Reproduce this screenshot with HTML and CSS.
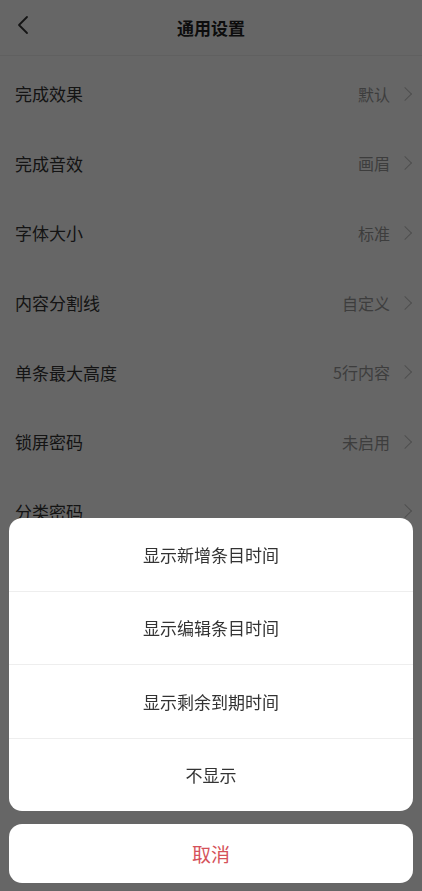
FILE: index.html
```html
<!DOCTYPE html>
<html lang="zh-CN">

<head>
    <meta charset="UTF-8">
    <meta name="viewport" content="width=device-width, initial-scale=1.0">
    <title>通用设置</title>
    <link rel="stylesheet" href="styles.css">
</head>

<body>

    <div class="page">
        <div class="header">
            <span class="back">
                <svg width="14" height="20" viewBox="0 0 14 20">
                    <path d="M11 2 L3 10 L11 18" fill="none" stroke="#333" stroke-width="1.8" stroke-linecap="round" stroke-linejoin="round" />
                </svg>
            </span>
            <h1>通用设置</h1>
        </div>

        <ul class="list">
            <li class="row"><span class="label">完成效果</span><span class="value">默认</span><i class="arrow"></i></li>
            <li class="row"><span class="label">完成音效</span><span class="value">画眉</span><i class="arrow"></i></li>
            <li class="row"><span class="label">字体大小</span><span class="value">标准</span><i class="arrow"></i></li>
            <li class="row"><span class="label">内容分割线</span><span class="value">自定义</span><i class="arrow"></i></li>
            <li class="row"><span class="label">单条最大高度</span><span class="value">5行内容</span><i class="arrow"></i></li>
            <li class="row"><span class="label">锁屏密码</span><span class="value">未启用</span><i class="arrow"></i></li>
            <li class="row"><span class="label">分类密码</span><span class="value"></span><i class="arrow"></i></li>
            <li class="row"><span class="label">显示时间</span><span class="value"></span><i class="arrow"></i></li>
        </ul>
    </div>

    <div class="mask"></div>

    <div class="sheet">
        <div class="options">
            <div class="option">显示新增条目时间</div>
            <div class="option">显示编辑条目时间</div>
            <div class="option">显示剩余到期时间</div>
            <div class="option">不显示</div>
        </div>
        <div class="cancel">取消</div>
    </div>

</body>

</html>
```

FILE: styles.css
```css
body {
    margin: 0;
    font-family: "Noto Sans CJK SC", "Noto Sans", sans-serif;
    background: #fff;
    color: #333;
    overflow: hidden;
}

.header {
    height: 55px;
    border-bottom: 1px solid #f0f0f0;
    display: flex;
    align-items: center;
    justify-content: center;
    position: relative;
}

.header h1 {
    margin: 0;
    font-size: 17px;
    font-weight: bold;
    color: #222;
}

.back {
    position: absolute;
    left: 16px;
    top: 15px;
}

.list {
    list-style: none;
    margin: 0;
    padding: 3px 0 0;
}

.row {
    height: 69.6px;
    display: flex;
    align-items: center;
    padding: 0 12px 0 15px;
}

.label {
    flex: 1;
    font-size: 17px;
    color: #333;
}

.value {
    font-size: 16px;
    color: #9a9a9a;
    margin-right: 10px;
}

.arrow {
    width: 9px;
    height: 9px;
    border-top: 1.5px solid #c4c4c4;
    border-right: 1.5px solid #c4c4c4;
    transform: rotate(45deg);
}

.mask {
    position: fixed;
    left: 0;
    top: 0;
    right: 0;
    bottom: 0;
    background: rgba(0, 0, 0, 0.6);
}

.sheet {
    position: fixed;
    left: 9px;
    right: 9px;
    bottom: 8px;
    display: flex;
    flex-direction: column;
    gap: 13px;
}

.options {
    background: #fff;
    border-radius: 13px;
    overflow: hidden;
}

.option {
    height: 72.5px;
    display: flex;
    align-items: center;
    justify-content: center;
    font-size: 17px;
    color: #333;
}

.option + .option {
    border-top: 1px solid #eee;
}

.cancel {
    height: 59px;
    background: #fff;
    border-radius: 13px;
    display: flex;
    align-items: center;
    justify-content: center;
    font-size: 19px;
    color: #d5525a;
}
```
